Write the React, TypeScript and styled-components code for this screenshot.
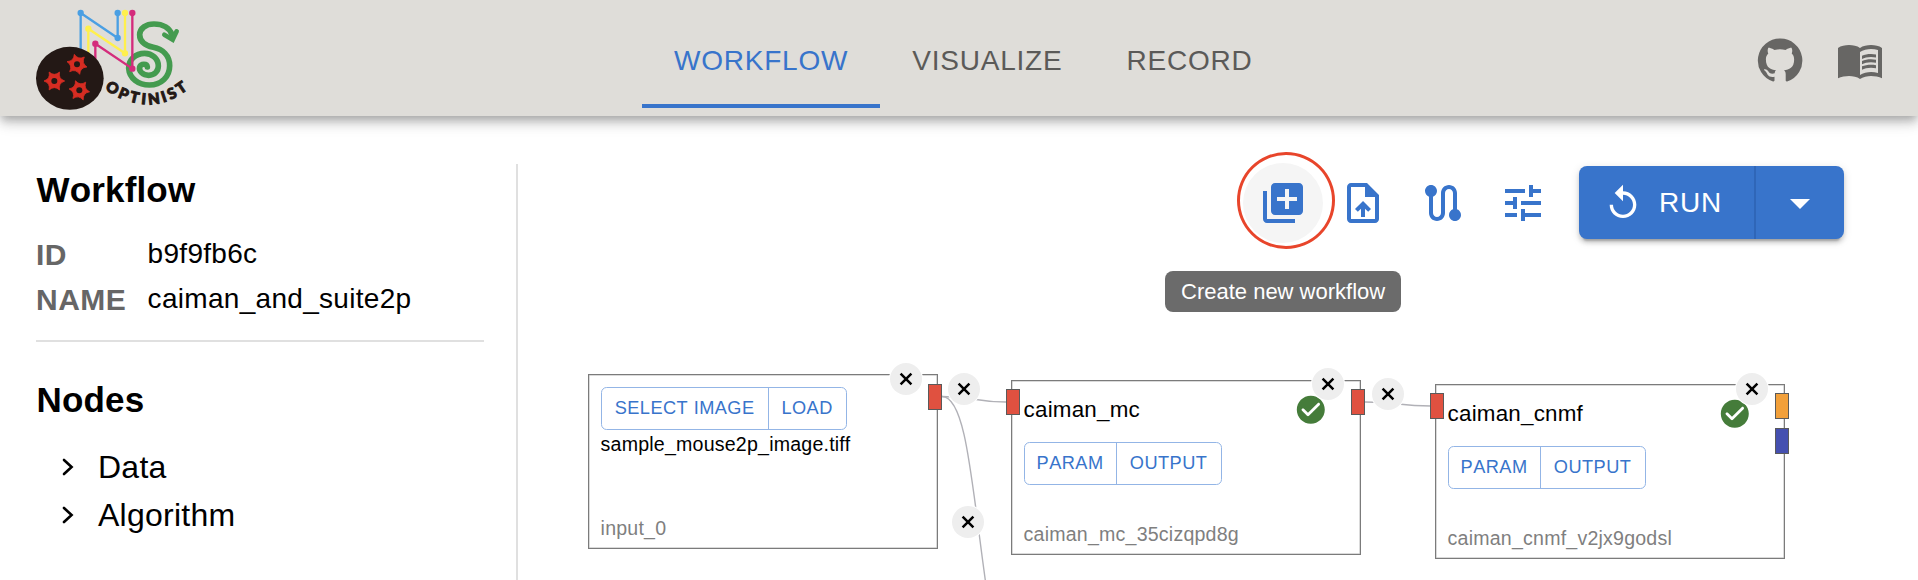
import React from "react";
import styled, { createGlobalStyle } from "styled-components";

const BLUE = "#3874cb";
const RED = "#e05140";
const ORANGE = "#f2a03a";
const INDIGO = "#4550b0";

const GlobalStyle = createGlobalStyle`
  * { box-sizing: border-box; }
  body {
    margin: 0;
    background: #fff;
    color: #000;
    font-family: "Liberation Sans", Arial, Helvetica, sans-serif;
    overflow: hidden;
  }
`;

const Page = styled.div`
  display: flex;
  flex-direction: column;
  width: 1918px;
  height: 580px;
  overflow: hidden;
`;

const Header = styled.header`
  position: relative;
  display: grid;
  grid-template-columns: 642px auto 1fr;
  height: 116px;
  flex: none;
  background: #dfddd9;
  box-shadow:
    0 4px 8px -2px rgba(0, 0, 0, 0.2),
    0 8px 10px 0 rgba(0, 0, 0, 0.14),
    0 2px 20px 0 rgba(0, 0, 0, 0.12);
`;

const LogoBox = styled.div`
  padding: 7px 0 0 36px;
  svg { display: block; }
`;

const Tabs = styled.nav`
  display: flex;
  height: 96px;
  margin-top: 12px;
`;

const Tab = styled.div<{ $active?: boolean }>`
  display: flex;
  align-items: center;
  justify-content: center;
  padding: ${(p) => (p.$active ? "6px 32px 0" : "2px 32px 0")};
  font-size: 28px;
  letter-spacing: 0.78px;
  font-kerning: none;
  color: ${(p) => (p.$active ? BLUE : "#5b5a58")};
  border-bottom: ${(p) => (p.$active ? `4px solid ${BLUE}` : "0")};
`;

const HeaderLinks = styled.div`
  display: flex;
  justify-content: flex-end;
  gap: 32px;
  padding: 36px 34px 0 0;
  color: #676664;
`;

const Main = styled.main`
  display: flex;
  flex: 1;
  min-height: 0;
  padding-top: 47px;
`;

const Sidebar = styled.aside`
  width: 518px;
  margin-top: 1px;
  padding: 0 32px 0 36px;
  border-right: 2px solid #e0e0e0;
`;

const Heading = styled.h2`
  margin: 0;
  padding-left: 0.6px;
  font-size: 35px;
  line-height: 52px;
  font-weight: 700;
  letter-spacing: 0.15px;
  font-kerning: none;
`;

const Info = styled.dl`
  display: grid;
  grid-template-columns: 111.6px 1fr;
  grid-auto-rows: 45px;
  margin: 17px 0;
`;

const Label = styled.dt`
  font-size: 30px;
  line-height: 43px;
  font-weight: 700;
  letter-spacing: 0.5px;
  color: #666;
`;

const Value = styled.dd`
  margin: 0;
  font-size: 28px;
  line-height: 42px;
  letter-spacing: 0.3px;
`;

const Divider = styled.hr`
  height: 2px;
  margin: 0 0 32px;
  border: 0;
  background: #e0e0e0;
`;

const Tree = styled.ul`
  margin: 17px 0 0;
  padding: 0 0 0 26px;
  list-style: none;
`;

const TreeItem = styled.li`
  display: flex;
  align-items: center;
  gap: 23px;
  height: 48px;
  font-size: 32px;
  letter-spacing: 0.25px;
`;

const Workspace = styled.section`
  display: flex;
  flex-direction: column;
  flex: 1;
`;

const Toolbar = styled.div`
  display: flex;
  align-items: center;
  justify-content: flex-end;
  height: 80px;
  padding-right: 74px;
`;

const IconButton = styled.div<{ $hover?: boolean }>`
  position: relative;
  display: flex;
  align-items: center;
  justify-content: center;
  width: 80px;
  height: 80px;
  border-radius: 50%;
  color: ${BLUE};
  background: ${(p) => (p.$hover ? "#f5f5f5" : "transparent")};
`;

const Ring = styled.span`
  position: absolute;
  left: -6px;
  top: -11px;
  width: 98px;
  height: 97px;
  border: 3px solid #e8452b;
  border-radius: 50%;
`;

const Tooltip = styled.div`
  position: absolute;
  left: -78px;
  top: 108px;
  padding: 0 16px;
  border-radius: 8px;
  background: #6b6b6b;
  color: #fff;
  font-size: 22px;
  line-height: 41px;
  white-space: nowrap;
`;

const RunGroup = styled.div`
  display: flex;
  height: 73px;
  width: 265px;
  margin: 0 0 1px 16px;
  border-radius: 8px;
  background: ${BLUE};
  color: #fff;
  box-shadow:
    0 6px 2px -4px rgba(0, 0, 0, 0.2),
    0 4px 4px 0 rgba(0, 0, 0, 0.14),
    0 2px 10px 0 rgba(0, 0, 0, 0.12);
`;

const RunButton = styled.div`
  display: flex;
  align-items: center;
  gap: 16px;
  width: 177px;
  padding-left: 24px;
  border-right: 2px solid #2f66b8;
  font-size: 28px;
  letter-spacing: 0.8px;
`;

const RunMenu = styled.div`
  display: flex;
  flex: 1;
  align-items: center;
  justify-content: center;
`;

const Canvas = styled.div`
  position: relative;
  flex: 1;
  overflow: hidden;
`;

const Edges = styled.svg`
  position: absolute;
  left: 0;
  top: 0;
`;

const Node = styled.div<{ $x: number; $y: number }>`
  position: absolute;
  left: ${(p) => p.$x}px;
  top: ${(p) => p.$y}px;
  display: flex;
  flex-direction: column;
  align-items: flex-start;
  width: 350px;
  height: 175px;
  padding: 12px 12px 6px 11.6px;
  border: 1px solid #7b7b7b;
  box-shadow: inset 0 0 0 0.5px #b5b5b5;
  background: #fff;
`;

const NodeTitle = styled.div`
  margin-bottom: 16px;
  font-size: 22.4px;
  line-height: 33px;
  letter-spacing: 0.2px;
`;

const FileName = styled.div`
  font-size: 19.6px;
  line-height: 28px;
  letter-spacing: 0.2px;
`;

const NodeId = styled.div`
  margin-top: auto;
  font-size: 19.6px;
  line-height: 28px;
  letter-spacing: 0.2px;
  color: #7f7f7f;
`;

const ButtonGroup = styled.div`
  display: flex;
  height: 43px;
  border: 1px solid #93b5e6;
  border-radius: 5.6px;
`;

const GroupButton = styled.div<{ $w: number }>`
  display: flex;
  align-items: center;
  justify-content: center;
  width: ${(p) => p.$w}px;
  font-size: 18.2px;
  letter-spacing: 0.46px;
  font-kerning: none;
  color: ${BLUE};
  white-space: nowrap;
  & + & { border-left: 1px solid #93b5e6; }
`;

const Port = styled.span<{ $side: "left" | "right"; $top: number; $color: string }>`
  position: absolute;
  ${(p) => (p.$side === "left" ? "left: -6px" : "right: -5px")};
  top: ${(p) => p.$top}px;
  width: 14px;
  height: 26px;
  border: 1.4px solid #5a5a5a;
  background: ${(p) => p.$color};
`;

const Close = styled.span<{ $x: number; $y: number }>`
  position: absolute;
  left: ${(p) => p.$x - 16}px;
  top: ${(p) => p.$y - 16}px;
  display: flex;
  align-items: center;
  justify-content: center;
  width: 32px;
  height: 32px;
  border-radius: 50%;
  background: #eee;
  box-shadow: 0 0 0 1px #fff;
`;

const Done = styled.span`
  position: absolute;
  left: 282.4px;
  top: 11.6px;
  color: #457c3a;
  svg { display: block; }
`;

const Icon = ({ d, size = 48 }: { d: string; size?: number }) => (
  <svg width={size} height={size} viewBox="0 0 24 24" fill="currentColor">
    <path d={d} />
  </svg>
);

const icons = {
  github:
    "M12 1.27a11 11 0 00-3.48 21.46c.55.09.73-.28.73-.55v-1.84c-3.03.64-3.67-1.46-3.67-1.46-.55-1.29-1.28-1.65-1.28-1.65-.92-.65.1-.65.1-.65 1.1 0 1.73 1.1 1.73 1.1.92 1.65 2.57 1.2 3.21.92a2 2 0 01.64-1.47c-2.47-.27-5.04-1.19-5.04-5.5 0-1.1.46-2.1 1.2-2.84a3.76 3.76 0 010-2.93s.91-.28 3.11 1.1c1.8-.49 3.7-.49 5.5 0 2.1-1.38 3.02-1.1 3.02-1.1a3.76 3.76 0 01.1 2.93c.83.74 1.2 1.74 1.2 2.94 0 4.21-2.57 5.13-5.04 5.4.45.37.82.92.82 2.02v3.03c0 .27.1.64.73.55A11 11 0 0012 1.27",
  book:
    "M17.5 4.5c-1.95 0-4.05.4-5.5 1.5-1.45-1.1-3.55-1.5-5.5-1.5S2.45 4.9 1 6v15.1C2.45 20.4 5.05 20 6.5 20c1.95 0 4.05.4 5.5 1.5 1.35-.85 3.8-1.5 5.5-1.5 1.65 0 4.1.4 5.5 1.1V6c-1.45-1.1-3.55-1.5-5.5-1.5zM21 18.5c-1.1-.35-2.3-.5-3.5-.5-1.7 0-4.15.65-5.5 1.5V8c1.35-.85 3.8-1.5 5.5-1.5 1.2 0 2.4.15 3.5.5v11.5zM17.5 10.5c.88 0 1.73.09 2.5.26V9.24c-.79-.15-1.64-.24-2.5-.24-1.7 0-3.24.29-4.5.83v1.66c1.13-.64 2.7-.99 4.5-.99zM13 12.49v1.66c1.13-.64 2.7-.99 4.5-.99.88 0 1.73.09 2.5.26V11.9c-.79-.15-1.64-.24-2.5-.24-1.7 0-3.24.3-4.5.83zM17.5 14.33c-1.7 0-3.24.29-4.5.83v1.66c1.13-.64 2.7-.99 4.5-.99.88 0 1.73.09 2.5.26v-1.52c-.79-.16-1.64-.24-2.5-.24z",
  add: "M4 6H2v14c0 1.1.9 2 2 2h14v-2H4V6zm16-4H8c-1.1 0-2 .9-2 2v12c0 1.1.9 2 2 2h12c1.1 0 2-.9 2-2V4c0-1.1-.9-2-2-2zm-1 9h-4v4h-2v-4H9V9h4V5h2v4h4v2z",
  upload:
    "M14 2H6c-1.1 0-1.99.9-1.99 2L4 20c0 1.1.89 2 1.99 2H18c1.1 0 2-.9 2-2V8l-6-6zm4 18H6V4h7v5h5v11zM8 15.01l1.41 1.41L11 14.84V19h2v-4.16l1.59 1.59L16 15.01 12.01 11 8 15.01z",
  route:
    "M19 15.18V7c0-2.21-1.79-4-4-4s-4 1.79-4 4v10c0 1.1-.9 2-2 2s-2-.9-2-2V8.82C8.16 8.4 9 7.3 9 6c0-1.66-1.34-3-3-3S3 4.34 3 6c0 1.3.84 2.4 2 2.82V17c0 2.21 1.79 4 4 4s4-1.79 4-4V7c0-1.1.9-2 2-2s2 .9 2 2v8.18c-1.16.41-2 1.51-2 2.82 0 1.66 1.34 3 3 3s3-1.34 3-3c0-1.3-.84-2.4-2-2.82z",
  tune: "M3 17v2h6v-2H3zM3 5v2h10V5H3zm10 16v-2h8v-2h-8v-2h-2v6h2zM7 9v2H3v2h4v2h2V9H7zm14 4v-2H11v2h10zm-6-4h2V7h4V5h-4V3h-2v6z",
  replay:
    "M12 5V1L7 6l5 5V7c3.31 0 6 2.69 6 6s-2.69 6-6 6-6-2.69-6-6H4c0 4.42 3.58 8 8 8s8-3.58 8-8-3.58-8-8-8z",
  drop: "m7 10 5 5 5-5z",
  check:
    "M12 2C6.48 2 2 6.48 2 12s4.48 10 10 10 10-4.48 10-10S17.52 2 12 2zM9.29 16.29 5.7 12.7a.9959.9959 0 0 1 0-1.41c.39-.39 1.02-.39 1.41 0L10 14.17l6.88-6.88c.39-.39 1.02-.39 1.41 0 .39.39.39 1.02 0 1.41l-7.59 7.59c-.38.39-1.02.39-1.41 0z",
};

const Chevron = () => (
  <svg width="13" height="18" viewBox="0 0 13 18" fill="none" stroke="#000" strokeWidth="2.6" strokeLinecap="round">
    <path d="M2 2l7.6 7L2 16" />
  </svg>
);

const CloseButton = ({ x, y }: { x: number; y: number }) => (
  <Close $x={x} $y={y}>
    <svg width="14" height="14" viewBox="0 0 14 14" stroke="#000" strokeWidth="2.5">
      <path d="M1.6 1.6l10.8 10.8M12.4 1.6L1.6 12.4" />
    </svg>
  </Close>
);

/* Six-pointed neuron with a dark nucleus. */
const Neuron = ({ x, y, turn }: { x: number; y: number; turn: number }) => {
  const points = Array.from({ length: 6 }, (_, i) => {
    const a = ((i * 60 + turn) * Math.PI) / 180;
    const b = a + Math.PI / 6;
    return [
      [31 * Math.cos(a), 31 * Math.sin(a)],
      [13 * Math.cos(b), 13 * Math.sin(b)],
    ];
  });
  const at = (p: number[]) => `${p[0].toFixed(1)} ${p[1].toFixed(1)}`;
  const path =
    `M${at(points[0][0])}` +
    points.map(([, valley], i) => `Q${at(valley)} ${at(points[(i + 1) % 6][0])}`).join("");
  return (
    <g transform={`translate(${x} ${y})`}>
      <path d={path} fill="#d62c22" stroke="#d62c22" strokeWidth="2.5" strokeLinejoin="round" />
      <circle r="9" fill="#231815" />
    </g>
  );
};

const Logo = () => (
  <svg width="154" height="104" viewBox="48 21 462 312" fill="none">
    <g strokeWidth="7">
      <g stroke="#4a9fe3" fill="#4a9fe3">
        <path d="M182 150V39l111 75V39" fill="none" />
        <circle cx="182" cy="39" r="6" />
        <circle cx="293" cy="114" r="6" />
        <circle cx="293" cy="39" r="6" />
      </g>
      <g stroke="#fff04d" fill="#fff04d">
        <path d="M205 165V86l110 74V39" fill="none" />
        <circle cx="205" cy="86" r="6" />
        <circle cx="315" cy="160" r="6" />
        <circle cx="315" cy="39" r="6" />
      </g>
    </g>
    <path
      d="M382 201C381 190 363 190 359 201C356 214 369 226 386 226C405 226 415 212 415 198C415 176 396 160 374 160C346 160 326 180 326 204C328 236 356 255 388 255C424 255 449 230 449 197C449 166 428 148 400 142C374 136 359 124 359 104C360 84 378 72 402 72C430 72 449 85 456 104"
      stroke="#449b4f"
      strokeWidth="17"
      strokeLinecap="round"
    />
    <path d="M433 104L458 119L470 94" stroke="#449b4f" strokeWidth="14" strokeLinecap="round" strokeLinejoin="miter" />
    <g stroke="#d42c7c" fill="#d42c7c" strokeWidth="7">
      <path d="M226 185V131l111 75V39" fill="none" />
      <circle cx="226" cy="131" r="6" />
      <circle cx="337" cy="206" r="6" />
      <circle cx="337" cy="39" r="6" />
    </g>
    <ellipse cx="149.5" cy="235" rx="101.5" ry="94.5" fill="#231815" />
    <Neuron x={171} y={193} turn={15} />
    <Neuron x={103} y={243} turn={0} />
    <Neuron x={178} y={271} turn={8} />
    <path id="logo-arc" d="M253 265Q310 312.5 391 313.5Q450 311.5 512 262" />
    <text fill="#231815" stroke="#231815" strokeWidth="3" fontFamily="Lato, sans-serif" fontWeight="900" fontSize="45">
      <textPath href="#logo-arc" startOffset="1" textLength="272">OPTINIST</textPath>
    </text>
  </svg>
);

const AlgorithmBody = ({ name, id }: { name: string; id: string }) => (
  <>
    <NodeTitle>{name}</NodeTitle>
    <ButtonGroup>
      <GroupButton $w={91}>PARAM</GroupButton>
      <GroupButton $w={105}>OUTPUT</GroupButton>
    </ButtonGroup>
    <NodeId>{id}</NodeId>
    <Done>
      <Icon d={icons.check} size={33.6} />
    </Done>
  </>
);

export default function App() {
  return (
    <Page>
      <GlobalStyle />
      <Header>
        <LogoBox>
          <Logo />
        </LogoBox>
        <Tabs>
          <Tab $active>WORKFLOW</Tab>
          <Tab>VISUALIZE</Tab>
          <Tab>RECORD</Tab>
        </Tabs>
        <HeaderLinks>
          <Icon d={icons.github} />
          <Icon d={icons.book} />
        </HeaderLinks>
      </Header>
      <Main>
        <Sidebar>
          <Heading>Workflow</Heading>
          <Info>
            <Label>ID</Label>
            <Value>b9f9fb6c</Value>
            <Label>NAME</Label>
            <Value>caiman_and_suite2p</Value>
          </Info>
          <Divider />
          <Heading>Nodes</Heading>
          <Tree>
            <TreeItem>
              <Chevron />
              Data
            </TreeItem>
            <TreeItem>
              <Chevron />
              Algorithm
            </TreeItem>
          </Tree>
        </Sidebar>
        <Workspace>
          <Toolbar>
            <IconButton $hover>
              <Icon d={icons.add} />
              <Ring />
              <Tooltip>Create new workflow</Tooltip>
            </IconButton>
            <IconButton>
              <Icon d={icons.upload} />
            </IconButton>
            <IconButton>
              <Icon d={icons.route} />
            </IconButton>
            <IconButton>
              <Icon d={icons.tune} />
            </IconButton>
            <RunGroup>
              <RunButton>
                <Icon d={icons.replay} size={40} />
                RUN
              </RunButton>
              <RunMenu>
                <Icon d={icons.drop} />
              </RunMenu>
            </RunGroup>
          </Toolbar>
          <Canvas>
            <Edges width="1400" height="337" fill="none" stroke="#b1b1b7" strokeWidth="1.4">
              <path d="M424 153.5C456 153.5 456 159 488 159" />
              <path d="M424 153.5C448 153.5 453.5 239 467.3 337" />
              <path d="M847 159C880 159 880 163 913 163" />
            </Edges>
            <Node $x={70} $y={131}>
              <ButtonGroup>
                <GroupButton $w={166}>SELECT IMAGE</GroupButton>
                <GroupButton $w={78}>LOAD</GroupButton>
              </ButtonGroup>
              <FileName>sample_mouse2p_image.tiff</FileName>
              <NodeId>input_0</NodeId>
              <Port $side="right" $top={9} $color={RED} />
            </Node>
            <Node $x={493} $y={137}>
              <AlgorithmBody name="caiman_mc" id="caiman_mc_35cizqpd8g" />
              <Port $side="left" $top={8} $color={RED} />
              <Port $side="right" $top={8} $color={RED} />
            </Node>
            <Node $x={917} $y={141}>
              <AlgorithmBody name="caiman_cnmf" id="caiman_cnmf_v2jx9godsl" />
              <Port $side="left" $top={8} $color={RED} />
              <Port $side="right" $top={8} $color={ORANGE} />
              <Port $side="right" $top={43} $color={INDIGO} />
            </Node>
            <CloseButton x={387.5} y={136} />
            <CloseButton x={445.8} y={145.5} />
            <CloseButton x={450.2} y={278.7} />
            <CloseButton x={809.8} y={141.3} />
            <CloseButton x={869.5} y={150.7} />
            <CloseButton x={1234.4} y={145.7} />
          </Canvas>
        </Workspace>
      </Main>
    </Page>
  );
}
